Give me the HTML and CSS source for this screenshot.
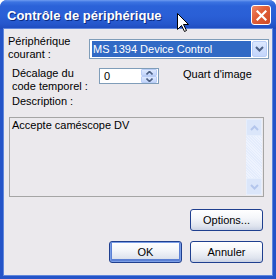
FILE: index.html
```html
<!DOCTYPE html>
<html lang="fr">
<head>
<meta charset="utf-8">
<title>Contrôle de périphérique</title>
<link rel="stylesheet" href="styles.css">
</head>
<body>
<div class="window">
  <div class="titlebar">
    <span class="title">Contrôle de périphérique</span>
    <button class="close" aria-label="Fermer">
      <svg width="11" height="11" viewBox="0 0 11 11"><path d="M1.5 1.5 L9.5 9.5 M9.5 1.5 L1.5 9.5" stroke="#fff" stroke-width="2.2" stroke-linecap="square"/></svg>
    </button>
  </div>
  <div class="frame">
    <div class="client">
      <div class="row row-device">
        <div class="label label-device">Périphérique<br>courant :</div>
        <div class="select">
          <div class="select-value"><span class="sel-text">MS 1394 Device Control</span></div>
          <div class="select-btn">
            <svg width="9" height="6" viewBox="0 0 9 6"><path d="M1 1 L4.5 4.5 L8 1" fill="none" stroke="#4d6185" stroke-width="2"/></svg>
          </div>
        </div>
      </div>
      <div class="row row-time">
        <div class="label label-time">Décalage du<br>code temporel :</div>
        <div class="spin">
          <span class="spin-value">0</span>
          <div class="spin-btns">
            <div class="spin-btn"><svg width="7" height="4" viewBox="0 0 7 4"><path d="M0.5 3.5 L3.5 0.5 L6.5 3.5" fill="none" stroke="#4d6185" stroke-width="1.6"/></svg></div>
            <div class="spin-btn"><svg width="7" height="4" viewBox="0 0 7 4"><path d="M0.5 0.5 L3.5 3.5 L6.5 0.5" fill="none" stroke="#4d6185" stroke-width="1.6"/></svg></div>
          </div>
        </div>
        <div class="label label-quart">Quart d'image</div>
      </div>
      <div class="label label-desc">Description :</div>
      <div class="textarea">
        <div class="textarea-text">Accepte caméscope DV</div>
        <div class="scrollbar">
          <div class="sb-btn"><svg width="9" height="6" viewBox="0 0 9 6"><path d="M1 5 L4.5 1.5 L8 5" fill="none" stroke="#b4c6ec" stroke-width="2"/></svg></div>
          <div class="sb-track"></div>
          <div class="sb-btn"><svg width="9" height="6" viewBox="0 0 9 6"><path d="M1 1 L4.5 4.5 L8 1" fill="none" stroke="#b4c6ec" stroke-width="2"/></svg></div>
        </div>
      </div>
      <div class="btn-row btn-row-options">
        <button class="btn">Options...</button>
      </div>
      <div class="btn-row btn-row-main">
        <button class="btn btn-default">OK</button>
        <button class="btn">Annuler</button>
      </div>
    </div>
  </div>
  <svg class="cursor" width="13" height="20" viewBox="0 0 13 20"><path d="M0.5 0.5 L0.5 16.5 L4.5 12.5 L7.5 18.5 L9.5 17.5 L6.5 11.5 L11.5 11.5 Z" fill="#fff" stroke="#000" stroke-width="1"/></svg>
</div>
</body>
</html>
```
FILE: styles.css
```css
html, body {
  margin: 0;
  padding: 0;
  background: #ffffff;
}
body {
  font-family: "Liberation Sans", Arial, sans-serif;
  font-size: 11px;
  color: #000;
}
.window {
  position: relative;
  width: 276px;
  height: 279px;
  display: flex;
  flex-direction: column;
  background: #2454c8;
  border-radius: 7px 7px 0 0;
  overflow: hidden;
}
.titlebar {
  height: 29px;
  flex: none;
  display: flex;
  align-items: center;
  justify-content: space-between;
  padding: 0 5px 0 7px;
  background: linear-gradient(#6f9cf0 0, #3c74e2 2px, #2b62d8 6px, #2a5fd6 16px, #2557cc 24px, #1f4bbd 29px);
}
.title {
  color: #fff;
  font-weight: bold;
  font-size: 13px;
  letter-spacing: 0;
  text-shadow: 1px 1px 0 #0a2a80;
  margin-top: 1px;
}
.close {
  width: 20px;
  height: 20px;
  padding: 0;
  margin: 1px 0 0 0;
  border: 1px solid #fff;
  border-radius: 3px;
  background: linear-gradient(135deg, #f08868 0%, #e2603a 40%, #cf4a25 100%);
  display: flex;
  align-items: center;
  justify-content: center;
  box-sizing: border-box;
}
.frame {
  flex: 1;
  display: flex;
  padding: 0 3px 3px 3px;
  background: #2454c8;
}
.client {
  flex: 1;
  background: #ebe9ed;
  box-shadow: 0 0 0 1px #5f86dc;
  margin: 0 1px 1px 1px;
  padding: 0 0 0 0;
  display: flex;
  flex-direction: column;
}
.label {
  line-height: 13px;
  white-space: nowrap;
}
.row {
  display: flex;
  align-items: flex-start;
}
.row-device {
  margin-top: 6px;
}
.label-device {
  width: 81px;
  padding-left: 4px;
  flex: none;
}
.select {
  margin-top: 4px;
  width: 180px;
  height: 20px;
  box-sizing: border-box;
  border: 1px solid #7f9db9;
  background: #fff;
  display: flex;
  padding: 1px;
}
.select-value {
  flex: 1;
  display: flex;
  padding-left: 1px;
}
.sel-text {
  flex: 1;
  background: #316ac5;
  color: #fff;
  line-height: 16px;
  padding-left: 1px;
  margin-right: 1px;
}
.select-btn {
  width: 15px;
  flex: none;
  box-sizing: border-box;
  border: 1px solid #b9cdf6;
  border-radius: 2px;
  background: linear-gradient(#dce8fe, #c3d5fb);
  display: flex;
  align-items: center;
  justify-content: center;
}
.row-time {
  margin-top: 6px;
}
.label-time {
  width: 87px;
  padding-left: 8px;
  flex: none;
}
.spin {
  margin-top: 1px;
  width: 60px;
  height: 16px;
  box-sizing: border-box;
  border: 1px solid #7f9db9;
  background: #fff;
  display: flex;
  align-items: center;
  padding: 0 1px 0 4px;
}
.spin-value {
  flex: 1;
  line-height: 14px;
}
.spin-btns {
  width: 16px;
  height: 14px;
  display: flex;
  flex-direction: column;
}
.spin-btn {
  flex: 1;
  box-sizing: border-box;
  border: 1px solid #b9cdf6;
  border-radius: 1px;
  background: linear-gradient(#dce8fe, #c3d5fb);
  display: flex;
  align-items: center;
  justify-content: center;
}
.label-quart {
  margin-left: 24px;
  margin-top: 1px;
}
.label-desc {
  margin-top: 2px;
  padding-left: 8px;
}
.textarea {
  margin: 9px 0 0 5px;
  width: 255px;
  height: 80px;
  box-sizing: border-box;
  border: 1px solid #a5a5a5;
  display: flex;
  padding: 1px 1px 1px 2px;
}
.textarea-text {
  flex: 1;
  line-height: 13px;
}
.scrollbar {
  width: 16px;
  display: flex;
  flex-direction: column;
  background: repeating-linear-gradient(45deg, #eef3fe 0, #eef3fe 1px, #e4ecfc 1px, #e4ecfc 2px);
}
.sb-btn {
  height: 17px;
  box-sizing: border-box;
  border: 1px solid #e6eefc;
  border-radius: 2px;
  background: #dbe6fa;
  display: flex;
  align-items: center;
  justify-content: center;
}
.sb-track {
  flex: 1;
}
.btn-row {
  display: flex;
  justify-content: flex-end;
  gap: 8px;
  padding-right: 9px;
}
.btn-row-options {
  margin-top: 12px;
}
.btn-row-main {
  margin-top: 10px;
}
.btn {
  width: 73px;
  height: 22px;
  padding: 0;
  font-family: "Liberation Sans", Arial, sans-serif;
  font-size: 11px;
  color: #000;
  border: 1px solid #1f3f8f;
  border-radius: 3px;
  background: linear-gradient(#ffffff 0%, #f4f6fa 40%, #dfe4ee 80%, #c9d2e4 100%);
  box-sizing: border-box;
}
.btn-default {
  box-shadow: inset 0 0 0 1px #7b9ee6, inset 0 -1px 0 2px #5b80d4;
}
.cursor {
  position: absolute;
  left: 177px;
  top: 13px;
}
```
